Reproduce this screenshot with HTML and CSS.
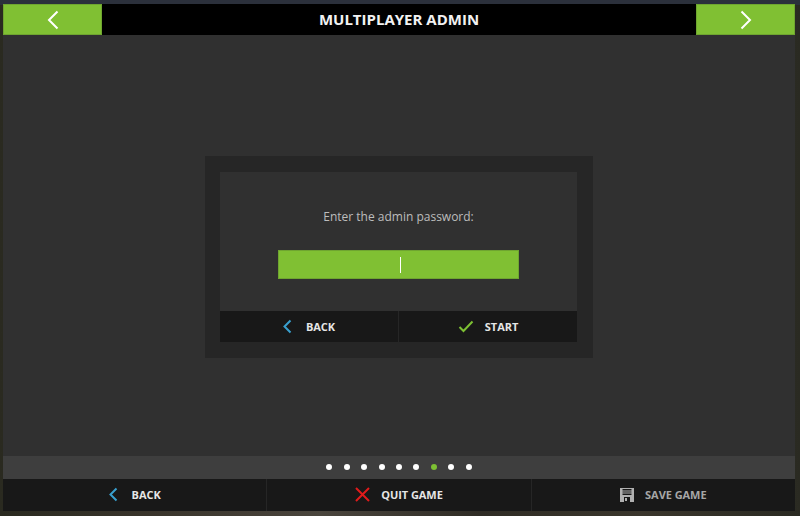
FILE: index.html
```html
<!DOCTYPE html>
<html lang="en">
<head>
<meta charset="utf-8">
<title>Multiplayer Admin</title>
<link rel="stylesheet" href="styles.css">
</head>
<body>
<div class="frame">
  <header class="top">
    <button class="nav"><svg width="14" height="20" viewBox="0 0 14 20"><path d="M11.500 1.500 3 10l8.500 8.500" class="w"/></svg></button>
    <h1>MULTIPLAYER ADMIN</h1>
    <button class="nav"><svg width="14" height="20" viewBox="0 0 14 20"><path d="M2.500 1.500 11 10l-8.500 8.500" class="w"/></svg></button>
  </header>
  <main class="body">
    <section class="dialog">
      <div class="inner">
        <div class="content">
          <p class="prompt">Enter the admin password:</p>
          <div class="input"><span class="caret"></span></div>
        </div>
        <div class="actions">
          <button class="act"><svg class="chev" width="9" height="15" viewBox="0 0 9 15"><path d="M7.500 1.500 1.500 7.500l6 6" class="b"/></svg><span>BACK</span></button>
          <button class="act"><svg width="16" height="13" viewBox="0 0 16 13"><path d="M1.500 7 5.500 11 14.500 1.500" class="g"/></svg><span>START</span></button>
        </div>
      </div>
    </section>
  </main>
  <div class="dots">
    <i></i><i></i><i></i><i></i><i></i><i></i><i class="on"></i><i></i><i></i>
  </div>
  <footer class="foot">
    <button class="act"><svg class="chev" width="9" height="15" viewBox="0 0 9 15"><path d="M7.500 1.500 1.500 7.500l6 6" class="b"/></svg><span>BACK</span></button>
    <button class="act"><svg width="15" height="15" viewBox="0 0 15 15"><path d="M1 1l13 13M14 1 1 14" class="r"/></svg><span>QUIT GAME</span></button>
    <button class="act dim"><svg width="14" height="14" viewBox="0 0 14 14"><path fill="#b0b0b0" fill-rule="evenodd" d="M0 0h14v14H0zM2.500 1v1.500h9V1zM2.500 3.500v1h9v-1zM2.500 5.500V7h9V5.500zM4 9v5h6V9zM5 10h2v3H5z"/></svg><span>SAVE GAME</span></button>
  </footer>
</div>
</body>
</html>
```
FILE: styles.css
```css
* { box-sizing: border-box; }
html, body { margin: 0; height: 100%; }
body {
  width: 800px;
  height: 516px;
  overflow: hidden;
  padding: 4px 5px 5px 3px;
  background:
    linear-gradient(180deg, #2b303b 0, #2b303b 5px, rgba(0,0,0,0) 5px),
    linear-gradient(90deg, #2a2a20 0, #3a352c 20%, #4a453d 40%, #2f2c25 60%, #3a362c 80%, #2a2a22 100%);
  font-family: "Open Sans", sans-serif;
}
.frame { display: flex; flex-direction: column; height: 100%; }
button { border: 0; padding: 0; margin: 0; font: inherit; cursor: default; }
.top { display: flex; height: 31px; background: #000; flex: none; }
.nav { width: 99px; background: #80c033; box-shadow: inset 0 0 0 1px #6fa530; display: flex; align-items: center; justify-content: center; }
.top h1 { flex: 1; margin: 0; color: #f2f2f2; font-size: 15px; font-weight: 700; line-height: 31px; text-align: center; }
.w, .b, .g, .r { fill: none; stroke-width: 2; }
.w { stroke: #fff; }
.b { stroke: #39a0cf; }
.g { stroke: #7dc033; }
.r { stroke: #e01b1b; }
.body { flex: 1; background: #303030; display: flex; align-items: center; justify-content: center; padding-top: 23px; }
.dialog { width: 388px; height: 202px; padding: 16px 16px 16px 15px; background: #262626; }
.inner { height: 100%; background: #303030; display: flex; flex-direction: column; }
.content { flex: 1; display: flex; flex-direction: column; align-items: center; }
.prompt { margin: 36px 0 0; color: #bdbdbd; font-size: 12px; line-height: 18px; }
.input { width: 241px; height: 29px; margin-top: 24px; background: #80c033; box-shadow: inset 0 0 0 1px #6fa530; display: flex; align-items: center; justify-content: center; }
.caret { width: 1px; height: 16px; background: #fff; margin-left: 3px; }
.actions { height: 31px; display: flex; background: #181818; }
.act { flex: 1; background: #181818; color: #e6e6e6; font-size: 11px; font-weight: 700; letter-spacing: -0.05px; display: flex; align-items: center; justify-content: center; gap: 11px; border-left: 1px solid #262626; padding-bottom: 1px; }
.act:first-child { border-left: 0; }
.chev { margin-right: 3px; }
.dots { height: 23px; flex: none; background: #3e3e3e; display: flex; align-items: center; justify-content: center; gap: 11.400px; padding-bottom: 2px; }
.dots i { width: 6px; height: 6px; border-radius: 50%; background: #fff; }
.dots i.on { background: #7dc033; }
.foot { height: 32px; flex: none; display: flex; background: #181818; }
.dim { color: #a6a6a6; }
```
